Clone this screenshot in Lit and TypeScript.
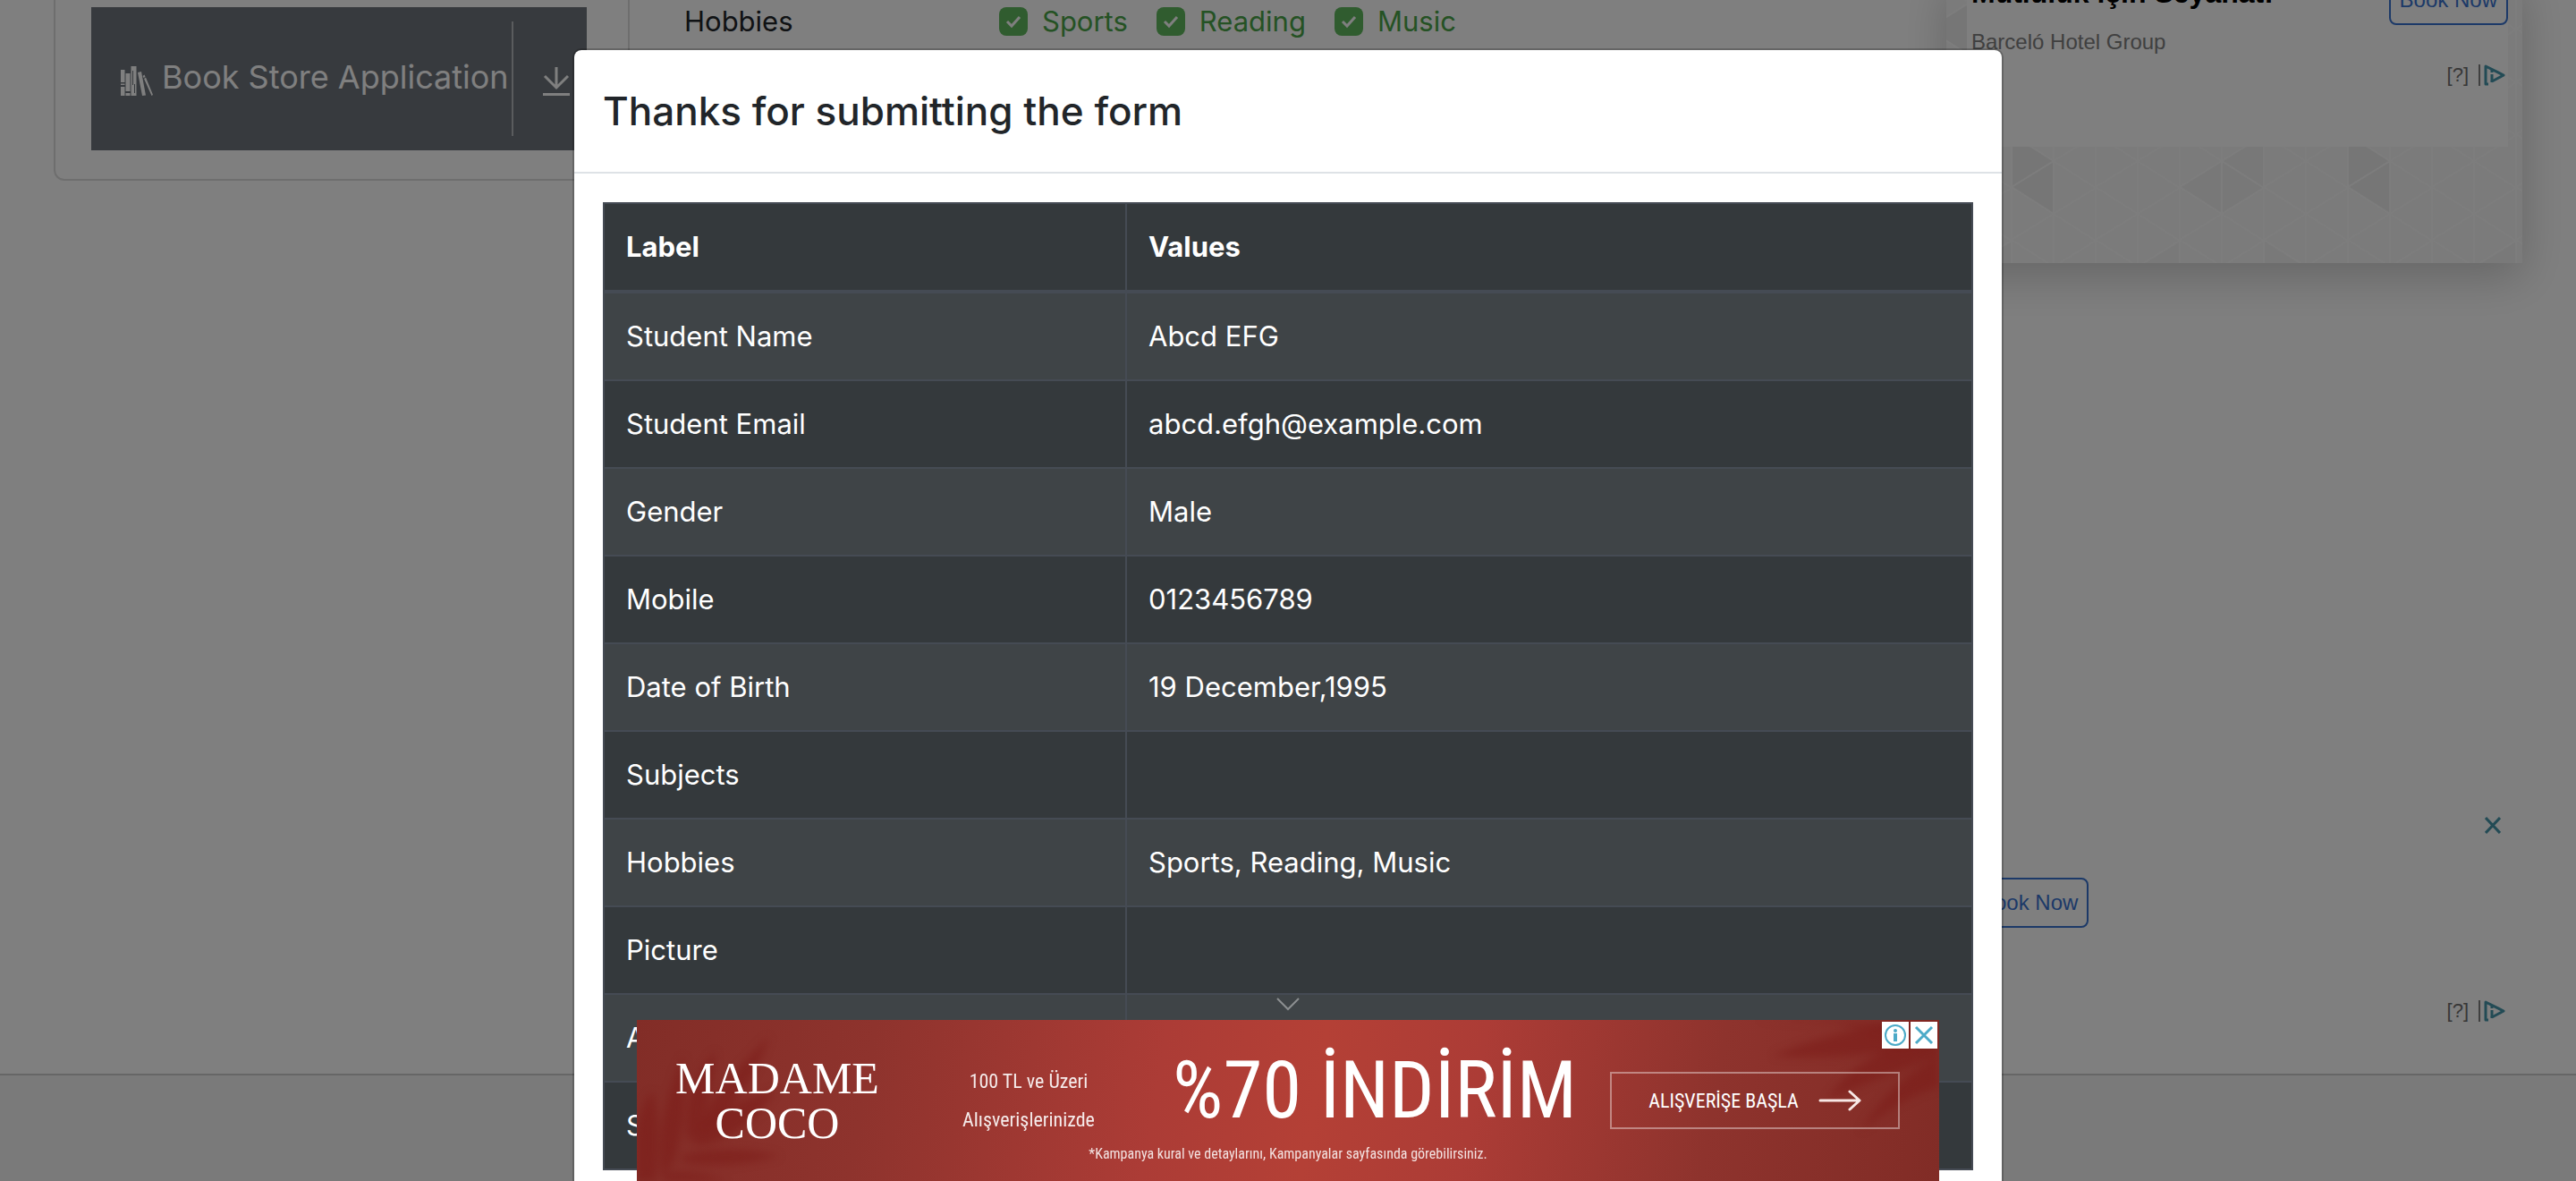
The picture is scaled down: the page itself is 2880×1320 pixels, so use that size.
import { LitElement, html, css, svg } from "lit";
import { customElement, property } from "lit/decorators.js";

const ROWS: [string, string][] = [
  ["Student Name", "Abcd EFG"],
  ["Student Email", "abcd.efgh@example.com"],
  ["Gender", "Male"],
  ["Mobile", "0123456789"],
  ["Date of Birth", "19 December,1995"],
  ["Subjects", ""],
  ["Hobbies", "Sports, Reading, Music"],
  ["Picture", ""],
  ["Address", ""],
  ["State and City", ""],
];

const HOBBIES = ["Sports", "Reading", "Music"];

// Triangular lattice behind the hotel advertisement.
function lattice() {
  const step = 47;
  const side = 59;
  const lines = [];
  for (let i = 0; i < 15; i++) {
    const x = 26 + (i - 1) * step;
    lines.push(`M${x} -20V360`);
    const y0 = i % 2 === 0 ? 1 : 31;
    for (let j = -1; j < 7; j++) {
      const y = y0 + j * side;
      lines.push(`M${x} ${y}L${x + step} ${y - 29}M${x} ${y}L${x + step} ${y + 30}`);
    }
  }
  return svg`
    <path fill="#ededed" d="M73 237l47-29v59zM449 237l47-29v59zM-21 60l47-29v59zM73 178l47 30l-47 29zM449 178l47 30l-47 29z"/>
    <path fill="#f1f1f1" d="M261 237l47-29v59zM355 237l-47-29v59zM355 178l-47 30l47 29z"/>
    <path fill="#f3f3f3" d="M214 326l47-30v59zM26 326l47-30v59zM402 326l-47-30v59zM637 296l-47 30l47 29z"/>
    <path fill="none" stroke="#fafafa" stroke-width="2" d="${lines.join("")}"/>`;
}

@customElement("ad-choices")
export class AdChoices extends LitElement {
  static styles = css`
    :host {
      display: flex;
      justify-content: flex-end;
      align-items: center;
      gap: 11px;
      height: 24px;
      font: 22px/24px "Liberation Sans", Arial, sans-serif;
      color: #6e6e6e;
    }
    .mark {
      display: flex;
      gap: 4px;
      align-items: center;
    }
    .bar {
      width: 2px;
      height: 24px;
      background: #808080;
    }
    svg {
      display: block;
    }
  `;
  render() {
    return html`<span>[?]</span>
      <span class="mark">
        <span class="bar"></span>
        <svg width="24" height="24" viewBox="0 0 24 24" fill="none" stroke="#4796ab" stroke-width="3" stroke-linejoin="round">
          <path d="M5 22H2V2L22 12L9 19V20" />
          <path d="M9 6v3M9 11v8" stroke-width="3" />
        </svg>
      </span>`;
  }
}

@customElement("result-modal")
export class ResultModal extends LitElement {
  @property({ attribute: false }) rows: [string, string][] = [];

  static styles = css`
    :host {
      display: block;
      box-sizing: border-box;
      width: 1600px;
      max-width: 100%;
      background: #fff;
      background-clip: padding-box;
      border: 2px solid rgba(0, 0, 0, 0.2);
      border-radius: 10px;
    }
    .head {
      padding: 32px;
      border-bottom: 2px solid #dee2e6;
    }
    h2 {
      margin: 0;
      font-size: 44px;
      line-height: 72px;
      font-weight: 500;
      color: #212529;
    }
    .body {
      padding: 32px;
    }
    table {
      width: 100%;
      border-collapse: collapse;
      color: #fff;
      font-size: 31px;
      line-height: 48px;
      border: 2px solid #454b54;
      background: #34393c;
    }
    th,
    td {
      height: 48px;
      padding: 24px;
      text-align: left;
      border: 2px solid #454b54;
    }
    thead th {
      border-bottom-width: 4px;
      font-weight: 700;
    }
    .first {
      width: 534px;
    }
    tbody tr:nth-child(odd) {
      background: #3f4447;
    }
  `;

  render() {
    return html`
      <header class="head"><h2 id="title">Thanks for submitting the form</h2></header>
      <div class="body">
        <table>
          <thead>
            <tr><th class="first">Label</th><th>Values</th></tr>
          </thead>
          <tbody>
            ${this.rows.map(([k, v]) => html`<tr><td>${k}</td><td>${v}</td></tr>`)}
          </tbody>
        </table>
      </div>
    `;
  }
}

@customElement("anchor-ad")
export class AnchorAd extends LitElement {
  static styles = css`
    :host {
      display: flex;
      flex-direction: column;
      align-items: center;
    }
    button {
      font: inherit;
      color: inherit;
      background: none;
      border: 0;
      padding: 0;
      cursor: pointer;
    }
    svg {
      display: block;
    }
    .collapse {
      padding: 9px 20px;
    }
    .banner {
      position: relative;
      display: grid;
      grid-template-columns: 314fr 248fr 526fr 324fr 44fr;
      grid-template-rows: 1fr 40px;
      width: 1456px;
      max-width: 100%;
      height: 180px;
      overflow: hidden;
      color: #fff;
      background: linear-gradient(100deg, #822d27 0%, #8e332d 18%, #ac3c36 40%, #b44036 52%, #ac3c36 64%, #8e332d 82%, #812c26 100%);
      font-family: "Liberation Sans Narrow", "Roboto Condensed", "Open Sans Condensed", Roboto, sans-serif;
    }
    .leaves {
      position: absolute;
      inset: 0;
      filter: blur(5px);
    }
    .logo,
    .terms,
    .cta {
      grid-row: 1 / 3;
      align-self: center;
      text-align: center;
      position: relative;
    }
    .logo {
      grid-column: 1;
      font: 50px/50px "Liberation Serif", serif;
    }
    .terms {
      grid-column: 2;
      font-size: 22px;
      line-height: 43px;
      opacity: 0.9;
    }
    .offer {
      grid-column: 3;
      grid-row: 1;
      margin: 0;
      padding-top: 18px;
      align-self: center;
      text-align: center;
      white-space: nowrap;
      font-size: 89px;
      line-height: 100px;
      font-weight: 400;
      position: relative;
    }
    .fine {
      grid-column: 1 / -1;
      grid-row: 2;
      margin: 0;
      text-align: center;
      font-size: 16px;
      line-height: 20px;
      opacity: 0.85;
      position: relative;
    }
    .cta {
      grid-column: 4;
      display: flex;
      align-items: center;
      justify-content: center;
      gap: 22px;
      height: 64px;
      border: 2px solid rgba(255, 255, 255, 0.4);
      font-size: 22px;
      white-space: nowrap;
    }
    .badges {
      position: absolute;
      top: 2px;
      right: 2px;
      display: flex;
      gap: 2px;
    }
    .badges button {
      background: #fff;
    }
  `;

  render() {
    return html`
      <button class="collapse" aria-label="Collapse">
        <svg width="28" height="16" viewBox="0 0 28 16" fill="none" stroke="#8c8f91" stroke-width="2">
          <path d="M2 1l12 12L26 1" />
        </svg>
      </button>
      <section class="banner">
        <svg class="leaves" width="1456" height="180" viewBox="0 0 1456 180">
          <g fill="#7c1c18" fill-opacity=".55">
            <path d="M28 175Q20 110 52 40Q58 110 40 160z" />
            <path d="M0 180Q-5 100 18 80Q28 120 20 180z" />
            <path d="M56 135Q50 75 88 35Q85 90 62 130z" />
            <path d="M62 130Q80 85 148 18Q130 75 90 110z" />
            <path d="M60 135Q90 95 155 78Q125 130 70 140z" />
            <path d="M50 152Q100 138 160 152Q100 168 50 158z" />
            <path d="M28 172Q70 165 112 185L40 190z" />
            <path d="M1270 40Q1340 10 1456 -4V26Q1350 46 1270 40z" />
            <path d="M1330 90Q1370 30 1456 18V40Q1400 60 1330 90z" />
            <path d="M1368 125Q1400 70 1456 40V75Q1415 85 1368 125z" />
            <path d="M1250 0H1456V12Q1380 20 1340 4z" fill-opacity=".3" />
          </g>
        </svg>
        <div class="logo">MADAME<br />COCO</div>
        <div class="terms">100 TL ve Üzeri<br />Alışverişlerinizde</div>
        <h3 class="offer">%70 İNDİRİM</h3>
        <button class="cta">
          ALIŞVERİŞE BAŞLA
          <svg width="48" height="24" viewBox="0 0 48 24" fill="none" stroke="#f8e8e6" stroke-width="3" stroke-linecap="round" stroke-linejoin="round">
            <path d="M2 12H45M35 2L46 12L35 22" />
          </svg>
        </button>
        <p class="fine">*Kampanya kural ve detaylarını, Kampanyalar sayfasında görebilirsiniz.</p>
        <div class="badges">
          <button aria-label="Ad information">
            <svg width="30" height="30" viewBox="0 0 30 30" fill="none" stroke="#4caac8">
              <circle cx="15" cy="15" r="11" stroke-width="2" />
              <circle cx="15" cy="10" r="2" fill="#4caac8" stroke="none" />
              <path d="M15 13v9" stroke-width="4" />
            </svg>
          </button>
          <button aria-label="Close ad">
            <svg width="30" height="30" viewBox="0 0 30 30" fill="none" stroke="#4caac8" stroke-width="3">
              <path d="M6 6L24 24M24 6L6 24" />
            </svg>
          </button>
        </div>
      </section>
    `;
  }
}

@customElement("app-root")
export class AppRoot extends LitElement {
  static styles = css`
    :host {
      display: block;
      position: relative;
      height: 100vh;
      overflow: hidden;
      background: #fff;
      color: #212529;
      font-family: Inter, "Noto Sans", sans-serif;
    }
    svg {
      display: block;
    }
    .page {
      display: flex;
      flex-direction: column;
      height: 100%;
    }
    .main {
      flex: 1;
      display: grid;
      grid-template-columns: minmax(0, 7fr) minmax(0, 16fr) minmax(0, 7fr);
      padding: 0 60px;
    }
    .footer {
      height: 118px;
      border-top: 2px solid #cccccc;
      background: #f4f4f4;
    }
    .side {
      align-self: start;
      padding: 8px 46px 32px 40px;
      border: 2px solid #dcdcdc;
      border-top: 0;
      border-radius: 0 0 12px 12px;
    }
    .item {
      display: flex;
      align-items: center;
      height: 160px;
      padding-left: 33px;
      background: #6e747c;
      color: #fff;
      text-decoration: none;
      font-size: 36px;
      line-height: 48px;
      white-space: nowrap;
    }
    .item .books {
      flex: none;
      margin: 6px 9px 0 0;
    }
    .item .name {
      padding-bottom: 4px;
    }
    .item .drop {
      display: flex;
      align-items: center;
      justify-content: center;
      flex: none;
      width: 84px;
      height: 128px;
      padding: 6px 0 0 14px;
      box-sizing: border-box;
      margin-left: auto;
      border-left: 2px solid #b4b8bc;
    }
    .form {
      display: grid;
      grid-template-columns: 352px 1fr;
      align-content: start;
      padding-left: 61px;
      font-size: 31px;
      line-height: 48px;
    }
    .choices {
      display: flex;
      gap: 32px;
    }
    .choice {
      display: flex;
      align-items: center;
      gap: 16px;
      color: #4aa548;
    }
    .box {
      display: grid;
    }
    .box > * {
      grid-area: 1 / 1;
    }
    .box input {
      appearance: none;
      width: 32px;
      height: 32px;
      margin: 0;
      border-radius: 8px;
      background: #60b95e;
    }
    .ads {
      display: flex;
      flex-direction: column;
      font-family: "Liberation Sans", Arial, sans-serif;
    }
    .card {
      position: relative;
      margin-top: -28px;
      padding: 0 16px 130px 23px;
      background: #f7f7f7;
      box-shadow: 0 16px 48px rgba(0, 0, 0, 0.2);
    }
    .lattice {
      position: absolute;
      inset: 0;
      width: 100%;
      height: 100%;
    }
    .sheet {
      position: relative;
      height: 192px;
      background: #fff;
      padding-left: 5px;
    }
    .top {
      display: flex;
      justify-content: space-between;
      align-items: flex-start;
    }
    .top h3 {
      margin: 2px 0 0;
      font-size: 32px;
      line-height: 36px;
      font-weight: 700;
      color: #000;
    }
    .book {
      box-sizing: border-box;
      height: 56px;
      padding: 0 10px;
      border: 2px solid #3873d0;
      border-radius: 8px;
      background: none;
      color: #3873d0;
      font: 24px/28px "Liberation Sans", Arial, sans-serif;
    }
    .brand {
      margin: 5px 0 11px;
      font-size: 24px;
      line-height: 28px;
      color: #808080;
    }
    ad-choices {
      padding-right: 3px;
    }
    .second {
      display: flex;
      flex-direction: column;
      margin: auto 16px 58px 26px;
    }
    .second .close {
      align-self: flex-end;
      margin: 0 8px 49px 0;
      padding: 0;
      border: 0;
      background: none;
    }
    .second .book {
      align-self: flex-start;
      margin-bottom: 81px;
    }
    .backdrop {
      position: absolute;
      inset: 0;
      background: rgba(0, 0, 0, 0.5);
    }
    .dialog {
      position: absolute;
      inset: 0;
      display: flex;
      justify-content: center;
      align-items: flex-start;
      padding-top: 54px;
    }
    .anchor {
      position: absolute;
      inset: auto 0 0 0;
    }
  `;

  render() {
    return html`
      <div class="page">
        <main class="main">
          <nav class="side">
            <a class="item" href="#books">
              <svg class="books" width="37" height="34" viewBox="0 0 37 34" fill="#fff">
                <path d="M0 4h4.500v14H0zM0 19.500h4.500v1.500H0zM0 23h4.500v10H0z" />
                <path d="M5.500 8h5v20h-5zM5.500 30h5v3h-5z" />
                <path fill-rule="evenodd" d="M11.500 0h6v33h-6zM13 5v16h1V5zM15 20v10h1V20z" />
                <path d="M19 7l4-1l5 26.500l-4 .5z" />
                <path d="M24.500 11l2-1.500l1 2.500l-2 1zM26 14l2-1.500l8 19.500l-1.500 1z" />
              </svg>
              <span class="name">Book Store Application</span>
              <span class="drop">
                <svg width="30" height="32" viewBox="0 0 30 32" fill="none" stroke="#fff" stroke-width="3">
                  <path d="M15 0v22M2 10l13 13l13-13M0 30.500h30" />
                </svg>
              </span>
            </a>
          </nav>
          <form class="form">
            <span>Hobbies</span>
            <div class="choices">
              ${HOBBIES.map(
                (h) => html`<label class="choice">
                  <span class="box">
                    <input type="checkbox" checked />
                    <svg width="32" height="32" viewBox="0 0 32 32" fill="none" stroke="#fff" stroke-width="3">
                      <path d="M9 16l5 5l9-10" />
                    </svg>
                  </span>
                  ${h}
                </label>`
              )}
            </div>
          </form>
          <aside class="ads">
            <section class="card">
              <svg class="lattice" viewBox="0 0 644 322" preserveAspectRatio="none">${lattice()}</svg>
              <div class="sheet">
                <div class="top">
                  <h3>Mutluluk için Seyahat!</h3>
                  <button class="book">Book Now</button>
                </div>
                <p class="brand">Barceló Hotel Group</p>
                <ad-choices></ad-choices>
              </div>
            </section>
            <section class="second">
              <button class="close" aria-label="Close ad">
                <svg width="18" height="19" viewBox="0 0 18 19" fill="none" stroke="#4796ab" stroke-width="3">
                  <path d="M1 1L17 18M17 1L1 18" />
                </svg>
              </button>
              <button class="book">Book Now</button>
              <ad-choices></ad-choices>
            </section>
          </aside>
        </main>
        <footer class="footer"></footer>
      </div>
      <div class="backdrop"></div>
      <div class="dialog">
        <result-modal role="dialog" aria-label="Thanks for submitting the form" .rows=${ROWS}></result-modal>
      </div>
      <div class="anchor"><anchor-ad></anchor-ad></div>
    `;
  }
}
